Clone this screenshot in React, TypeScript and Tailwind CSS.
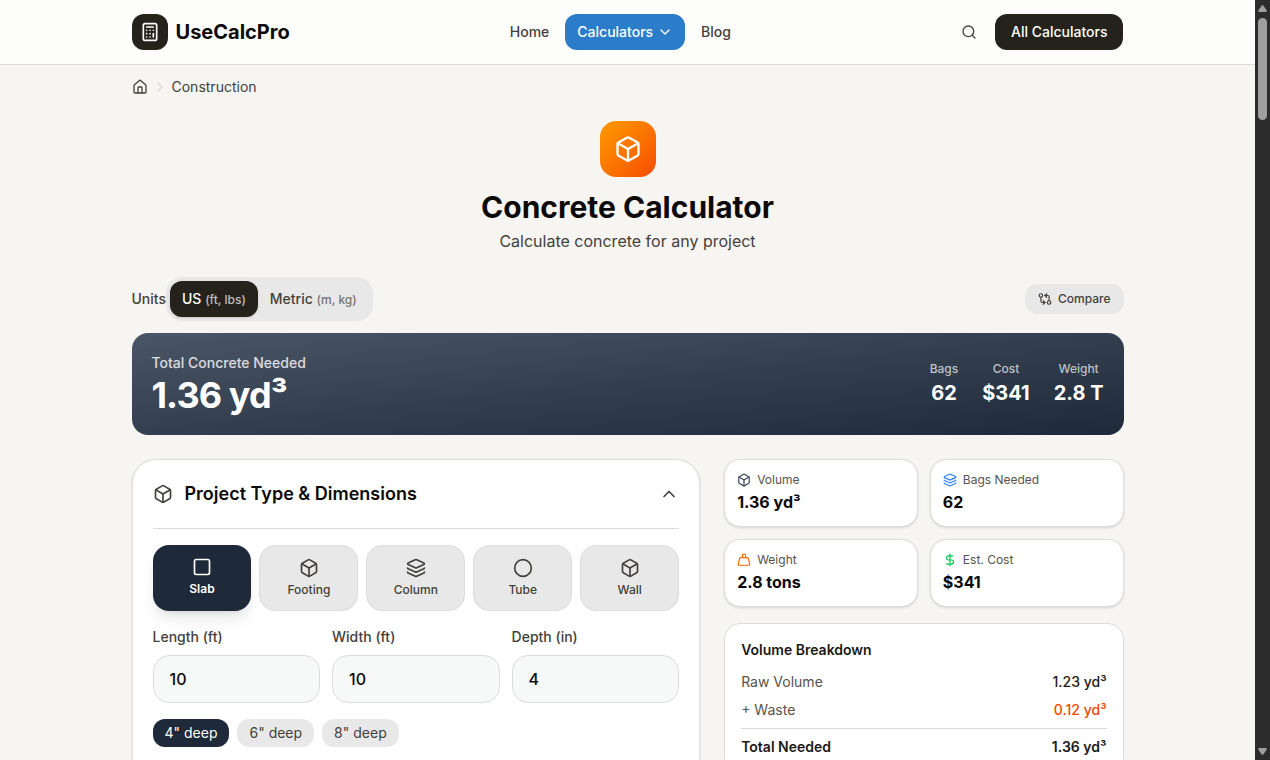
import { useState } from "react";
import {
    Box,
    Calculator,
    ChevronDown,
    ChevronRight,
    ChevronUp,
    Circle,
    DollarSign,
    GitCompareArrows,
    House,
    Layers,
    Search,
    Square,
    Weight,
} from "lucide-react";

const shapes = [
    { name: "Slab", icon: Square },
    { name: "Footing", icon: Box },
    { name: "Column", icon: Layers },
    { name: "Tube", icon: Circle },
    { name: "Wall", icon: Box },
];

const stats = [
    { label: "Volume", value: "1.36 yd³", icon: Box, color: "text-[#364153]" },
    { label: "Bags Needed", value: "62", icon: Layers, color: "text-[#2b7fff]" },
    { label: "Weight", value: "2.8 tons", icon: Weight, color: "text-[#ff6900]" },
    { label: "Est. Cost", value: "$341", icon: DollarSign, color: "text-[#00c950]" },
];

const totals = [
    { label: "Bags", value: "62" },
    { label: "Cost", value: "$341" },
    { label: "Weight", value: "2.8 T" },
];

const fields = [
    { id: "length", label: "Length (ft)" },
    { id: "width", label: "Width (ft)" },
    { id: "depth", label: "Depth (in)" },
] as const;

const Header = () => (
    <header className="border-b border-[#dcdcde] bg-[#fdfdfc]">
        <div className="mx-auto flex h-16 max-w-5xl items-center justify-between px-4">
            <a href="#" className="flex items-center gap-2">
                <span className="flex size-9 items-center justify-center rounded-xl bg-[#25211b] text-white">
                    <Calculator size={20} />
                </span>
                <span className="text-xl font-bold text-[#0c0a09]">UseCalcPro</span>
            </a>
            <nav className="flex items-center gap-1 text-sm font-medium text-[#44403b]">
                <a href="#" className="px-3 py-2">
                    Home
                </a>
                <button className="flex items-center gap-1 rounded-xl bg-[#2b7dca] px-3 py-2 text-white">
                    Calculators
                    <ChevronDown size={16} />
                </button>
                <a href="#" className="px-3 py-2">
                    Blog
                </a>
            </nav>
            <div className="flex items-center gap-2">
                <button
                    aria-label="Search"
                    className="flex size-9 items-center justify-center text-[#44403b]"
                >
                    <Search size={16} />
                </button>
                <a
                    href="#"
                    className="rounded-xl bg-[#25211b] px-4 py-2 text-sm font-medium text-white"
                >
                    All Calculators
                </a>
            </div>
        </div>
    </header>
);

const UnitsToggle = () => {
    const [unit, setUnit] = useState("US");
    const options = [
        { name: "US", hint: "(ft, lbs)" },
        { name: "Metric", hint: "(m, kg)" },
    ];

    return (
        <div className="flex items-center text-sm font-medium text-[#44403b]">
            <span>Units</span>
            <div className="flex rounded-2xl bg-[#e8e8e8] p-1">
                {options.map(({ name, hint }) => (
                    <button
                        key={name}
                        onClick={() => setUnit(name)}
                        className={`rounded-xl px-3 py-2 ${
                            unit === name ? "bg-[#25211b] text-white shadow-sm" : ""
                        }`}
                    >
                        {name} <span className="text-xs opacity-70">{hint}</span>
                    </button>
                ))}
            </div>
        </div>
    );
};

const Summary = () => (
    <section className="mt-3 flex items-center justify-between rounded-2xl bg-gradient-to-br from-[#4a5565] to-[#1e2939] p-5 text-white">
        <div>
            <p className="text-sm font-medium text-white/80">Total Concrete Needed</p>
            <p className="mt-0.5 text-4xl font-bold tracking-tight">1.36 yd³</p>
        </div>
        <dl className="flex gap-6 text-center">
            {totals.map(({ label, value }) => (
                <div key={label}>
                    <dt className="text-xs font-medium text-white/70">{label}</dt>
                    <dd className="mt-0.5 text-xl font-bold">{value}</dd>
                </div>
            ))}
        </dl>
    </section>
);

const ProjectForm = () => {
    const [open, setOpen] = useState(true);
    const [shape, setShape] = useState("Slab");
    const [values, setValues] = useState({ length: "10", width: "10", depth: "4" });

    return (
        <section className="rounded-3xl border border-[#dcdcdc] bg-white shadow-sm md:col-span-7">
            <h2>
                <button
                    onClick={() => setOpen(!open)}
                    className="flex w-full items-center gap-3 p-5 text-left text-lg font-semibold text-[#0c0a09]"
                >
                    <Box size={20} className="text-[#44403b]" />
                    <span className="flex-1">Project Type & Dimensions</span>
                    <ChevronUp size={20} className="text-[#44403b]" />
                </button>
            </h2>
            {open && (
                <div className="mx-5 border-t border-[#dcdcdc] pt-4 pb-12">
                    <div className="grid grid-cols-5 gap-2">
                        {shapes.map(({ name, icon: Icon }) => (
                            <button
                                key={name}
                                onClick={() => setShape(name)}
                                className={`flex flex-col items-center gap-1 rounded-2xl p-3 text-xs ${
                                    shape === name
                                        ? "bg-[#1e2939] font-semibold text-white shadow-lg"
                                        : "border border-[#dcdcdc] bg-[#e8e8e8] font-medium text-[#44403b]"
                                }`}
                            >
                                <Icon size={20} />
                                {name}
                            </button>
                        ))}
                    </div>
                    <div className="mt-4 grid grid-cols-3 gap-3">
                        {fields.map(({ id, label }) => (
                            <div key={id}>
                                <label
                                    htmlFor={id}
                                    className="mb-2 block text-sm font-medium text-[#44403b]"
                                >
                                    {label}
                                </label>
                                <input
                                    id={id}
                                    type="text"
                                    inputMode="decimal"
                                    value={values[id]}
                                    onChange={(e) => setValues({ ...values, [id]: e.target.value })}
                                    className="h-12 w-full rounded-2xl border border-[#dcdcdc] bg-[#f7f9f8] px-4 font-medium text-[#0c0a09] outline-none focus:border-[#1e2939]"
                                />
                            </div>
                        ))}
                    </div>
                    <div className="mt-4 flex gap-2">
                        {["4", "6", "8"].map((depth) => (
                            <button
                                key={depth}
                                onClick={() => setValues({ ...values, depth })}
                                className={`rounded-xl px-3 py-1 text-sm ${
                                    values.depth === depth
                                        ? "bg-[#1e2939] text-white"
                                        : "bg-[#e8e8e8] text-[#44403b]"
                                }`}
                            >
                                {depth}" deep
                            </button>
                        ))}
                    </div>
                </div>
            )}
        </section>
    );
};

const Results = () => (
    <aside className="md:col-span-5">
        <div className="grid grid-cols-2 gap-3">
            {stats.map(({ label, value, icon: Icon, color }) => (
                <div
                    key={label}
                    className="rounded-2xl border border-[#dcdcdc] bg-white p-3 shadow-sm"
                >
                    <p className="flex items-center gap-1.5 text-xs text-[#57534d]">
                        <Icon size={14} className={color} />
                        {label}
                    </p>
                    <p className="mt-0.5 font-bold text-[#0c0a09]">{value}</p>
                </div>
            ))}
        </div>
        <section className="mt-4 rounded-2xl border border-[#dcdcdc] bg-white p-4 text-sm">
            <h3 className="font-semibold text-[#1c1917]">Volume Breakdown</h3>
            <dl className="mt-3 space-y-2 text-[#57534d]">
                <div className="flex justify-between">
                    <dt>Raw Volume</dt>
                    <dd className="font-medium text-[#1c1917]">1.23 yd³</dd>
                </div>
                <div className="flex justify-between">
                    <dt>+ Waste</dt>
                    <dd className="font-medium text-[#f54900]">0.12 yd³</dd>
                </div>
                <div className="flex justify-between border-t border-[#dcdcdc] pt-2 font-semibold text-[#1c1917]">
                    <dt>Total Needed</dt>
                    <dd>1.36 yd³</dd>
                </div>
            </dl>
        </section>
    </aside>
);

const ScrollRail = () => (
    <div
        aria-hidden="true"
        className="flex w-[15px] shrink-0 flex-col items-center justify-between bg-[#2c2c2c] py-1 text-[#9f9f9f]"
    >
        <div className="flex flex-col items-center gap-1.5">
            <svg width="9" height="8" viewBox="0 0 9 8" fill="currentColor">
                <path d="M3.8 1.4a1 1 0 0 1 1.4 0L8.6 6.3Q9 8 7.8 8H1.2Q0 8 .4 6.3Z" />
            </svg>
            <div className="h-[102px] w-[9px] rounded-full bg-[#9f9f9f]" />
        </div>
        <svg width="9" height="8" viewBox="0 0 9 8" fill="currentColor">
            <path d="M3.8 6.6a1 1 0 0 0 1.4 0L8.6 1.7Q9 0 7.8 0H1.2Q0 0 .4 1.7Z" />
        </svg>
    </div>
);

const App = () => (
    <div className="flex h-screen bg-[#f6f5f1] font-['Inter',sans-serif]">
        <div className="min-w-0 flex-1 overflow-hidden">
            <Header />
            <main className="mx-auto max-w-5xl px-4">
                <nav
                    aria-label="Breadcrumb"
                    className="flex items-center gap-1 py-3 text-sm text-[#44403b]"
                >
                    <a href="#" aria-label="Home">
                        <House size={16} />
                    </a>
                    <ChevronRight size={16} className="text-[#dcdcdc]" />
                    <a href="#">Construction</a>
                </nav>

                <div className="flex flex-col items-center pt-3 text-center">
                    <div className="flex size-14 items-center justify-center rounded-2xl bg-gradient-to-br from-[#fe9a00] to-[#f54900] text-white">
                        <Box size={28} />
                    </div>
                    <h1 className="mt-3 text-3xl font-bold text-[#0c0a09]">
                        Concrete Calculator
                    </h1>
                    <p className="mt-1 text-[#44403b]">Calculate concrete for any project</p>
                </div>

                <div className="mt-6 flex items-center justify-between">
                    <UnitsToggle />
                    <button className="flex items-center gap-1.5 rounded-xl border border-[#e8e8e8] bg-[#e8e8e8] px-3 py-1.5 text-xs font-medium text-[#44403b]">
                        <GitCompareArrows size={14} />
                        Compare
                    </button>
                </div>

                <Summary />

                <div className="mt-6 grid items-start gap-6 md:grid-cols-12">
                    <ProjectForm />
                    <Results />
                </div>
            </main>
        </div>
        <ScrollRail />
    </div>
);

export default App;
